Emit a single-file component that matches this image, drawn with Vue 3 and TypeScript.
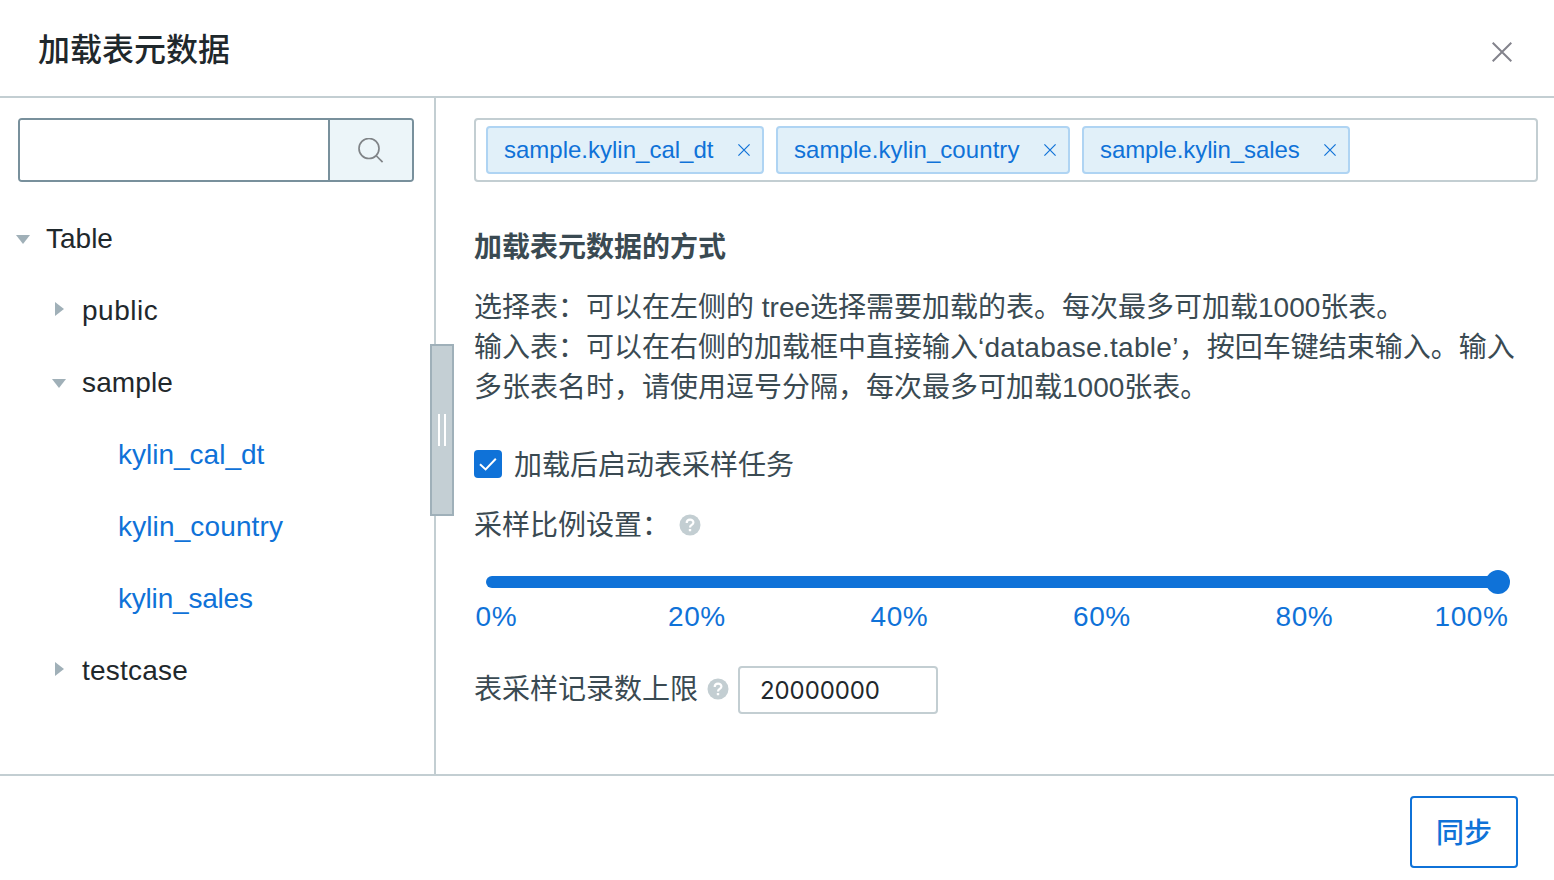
<script setup lang="ts">
import { ref } from 'vue'

interface TreeNode {
  label: string
  level: number
  state: 'open' | 'closed' | 'leaf'
}

interface Tag {
  name: string
  size: string
}

const nodes: TreeNode[] = [
  { label: 'Table', level: 0, state: 'open' },
  { label: 'public', level: 1, state: 'closed' },
  { label: 'sample', level: 1, state: 'open' },
  { label: 'kylin_cal_dt', level: 2, state: 'leaf' },
  { label: 'kylin_country', level: 2, state: 'leaf' },
  { label: 'kylin_sales', level: 2, state: 'leaf' },
  { label: 'testcase', level: 1, state: 'closed' },
]

const tags = ref<Tag[]>([
  { name: 'sample.kylin_cal_dt', size: 'medium' },
  { name: 'sample.kylin_country', size: 'large' },
  { name: 'sample.kylin_sales', size: 'small' },
])

const marks: string[] = ['0%', '20%', '40%', '60%', '80%', '100%']
const keyword = ref('')
const limit = ref('20000000')
</script>

<template>
  <div class="dialog">
    <header class="header">
      <h1 class="title">加载表元数据</h1>
      <svg class="close" viewBox="0 0 20 20" width="20" height="20">
        <path d="M0.7 0.7L19.3 19.3M19.3 0.7L0.7 19.3" />
      </svg>
    </header>

    <div class="body">
      <aside class="side">
        <div class="search">
          <input v-model="keyword" class="search-input" type="text" />
          <div class="search-button">
            <svg viewBox="0 0 26 26" width="26" height="26">
              <circle cx="11" cy="10.5" r="10" />
              <path d="M18 17.5L24.6 24.1" />
            </svg>
          </div>
        </div>
        <div class="tree">
          <div v-for="n in nodes" :key="n.label" class="node" :class="['level-' + n.level, n.state]">
            <span class="caret">
              <svg v-if="n.state === 'open'" class="down" viewBox="0 0 14 9" width="14" height="9"><path d="M0 0H14L7 9Z" /></svg>
              <svg v-else-if="n.state === 'closed'" class="right" viewBox="0 0 9 14" width="9" height="14"><path d="M0 0L9 7L0 14Z" /></svg>
            </span>
            <span class="label" :class="n.label">{{ n.label }}</span>
          </div>
        </div>
        <div class="handle"><i></i><i></i></div>
      </aside>

      <main class="main">
        <div class="tags">
          <span v-for="t in tags" :key="t.name" class="tag" :class="t.size">
            <span class="tag-text">{{ t.name }}</span>
            <svg viewBox="0 0 12 12" width="12" height="12"><path d="M0.4 0.4L11.6 11.6M11.6 0.4L0.4 11.6" /></svg>
          </span>
        </div>

        <h2 class="subtitle">加载表元数据的方式</h2>
        <div class="desc">
          <p>选择表：可以在左侧的 tree选择需要加载的表。每次最多可加载1000张表。</p>
          <p>输入表：可以在右侧的加载框中直接输入<span class="sample-name">‘database.table’</span>，按回车键结束输入。输入</p>
          <p>多张表名时，请使用逗号分隔，每次最多可加载1000张表。</p>
        </div>

        <div class="check">
          <span class="box">
            <svg viewBox="0 0 28 28" width="28" height="28"><path d="M6 14.3L11.6 19.4L21.8 8.8" /></svg>
          </span>
          <span class="check-text">加载后启动表采样任务</span>
        </div>

        <div class="ratio">
          <span class="ratio-text">采样比例设置：</span>
          <svg class="help" viewBox="0 0 22 22" width="22" height="22">
            <circle cx="11" cy="11" r="10.5" />
            <path d="M7.7 8.9C7.7 4.6 14.4 4.6 14.4 8.6C14.4 11 11 10.9 11 13.4" />
            <rect x="9.8" y="14.9" width="2.4" height="2.4" rx="0.6" />
          </svg>
        </div>

        <div class="slider"><div class="thumb"></div></div>
        <div class="marks">
          <span v-for="m in marks" :key="m">{{ m }}</span>
        </div>

        <div class="limit">
          <span class="limit-text">表采样记录数上限</span>
          <svg class="help" viewBox="0 0 22 22" width="22" height="22">
            <circle cx="11" cy="11" r="10.5" />
            <path d="M7.7 8.9C7.7 4.6 14.4 4.6 14.4 8.6C14.4 11 11 10.9 11 13.4" />
            <rect x="9.8" y="14.9" width="2.4" height="2.4" rx="0.6" />
          </svg>
          <input v-model="limit" class="limit-input" type="text" />
        </div>
      </main>
    </div>

    <footer class="footer">
      <button class="sync" type="button">同步</button>
    </footer>
  </div>
</template>

<style>
body {
  margin: 0;
  background: #fff;
}
</style>

<style scoped>
* {
  box-sizing: border-box;
}
.dialog {
  display: flex;
  flex-direction: column;
  width: 1554px;
  height: 880px;
  overflow: hidden;
  background: #fff;
  color: #3a4a52;
  font-family: 'Liberation Sans', 'Noto Sans CJK SC', sans-serif;
  font-size: 28px;
  white-space: nowrap;
}
svg {
  display: block;
  flex: none;
}
.header {
  display: flex;
  justify-content: space-between;
  height: 98px;
  padding: 0 42px 0 38px;
  border-bottom: 2px solid #c3ced2;
}
.title {
  margin: 0;
  color: #1f282c;
  font-size: 32px;
  font-weight: 500;
  line-height: 100px;
}
.close {
  margin-top: 42px;
  fill: none;
  stroke: #83838c;
  stroke-width: 2;
}
.body {
  display: flex;
  height: 676px;
}
.side {
  position: relative;
  width: 436px;
  padding: 20px 20px 0 18px;
  border-right: 2px solid #c3ced2;
}
.search {
  display: flex;
  width: 396px;
  height: 64px;
  overflow: hidden;
  border: 2px solid #78909c;
  border-radius: 4px;
}
.search-input {
  width: 308px;
  padding: 0 16px;
  border: 0;
  outline: 0;
  font: inherit;
}
.search-button {
  flex: 1;
  padding: 18px 0 0 28px;
  border-left: 2px solid #78909c;
  background: #ecf5f9;
}
.search-button svg {
  fill: none;
  stroke: #808488;
  stroke-width: 1.7;
}
.tree {
  margin: 21px 0 0 -18px;
}
.node {
  display: flex;
  height: 72px;
  color: #1f282c;
  line-height: 72px;
}
.node.leaf {
  color: #0f72d8;
}
.level-0 {
  padding-left: 14px;
}
.level-1 {
  padding-left: 50px;
}
.level-2 {
  padding-left: 86px;
}
.label.public {
  letter-spacing: 0.5px;
}
.label.sample,
.label.kylin_country {
  letter-spacing: 0.13px;
}
.label.kylin_sales {
  letter-spacing: -0.2px;
}
.label.testcase {
  letter-spacing: 0.22px;
}
.caret {
  width: 32px;
  flex: none;
}
.caret svg {
  fill: #a0b0b8;
}
.caret .down {
  margin: 32px 0 0 2px;
}
.caret .right {
  margin: 27px 0 0 5px;
}
.handle {
  position: absolute;
  z-index: 1;
  top: 246px;
  left: 430px;
  display: flex;
  align-items: center;
  justify-content: center;
  gap: 4px;
  width: 24px;
  height: 172px;
  border: 2px solid #9fb0b9;
  background: #c4cfd4;
}
.handle i {
  width: 2px;
  height: 32px;
  background: #fff;
}
.main {
  width: 1118px;
  padding: 20px 16px 0 38px;
}
.tags {
  display: flex;
  align-items: center;
  gap: 12px;
  height: 64px;
  padding-left: 10px;
  border: 2px solid #c3ced2;
  border-radius: 4px;
}
.tag {
  display: flex;
  align-items: center;
  justify-content: space-between;
  height: 48px;
  padding: 0 12px 0 16px;
  border: 2px solid #afd4f3;
  border-radius: 4px;
  background: #e1f0f9;
  color: #0f72d8;
  font-size: 24px;
  line-height: 44px;
}
.tag.medium {
  width: 278px;
}
.tag.large {
  width: 294px;
  letter-spacing: 0.07px;
}
.tag.small {
  width: 268px;
  letter-spacing: -0.1px;
}
.tag svg {
  fill: none;
  stroke: #0f72d8;
  stroke-width: 1.2;
}
.subtitle {
  margin: 46px 0 0;
  font-size: 28px;
  font-weight: 700;
  line-height: 40px;
}
.desc {
  margin-top: 20px;
  line-height: 40px;
}
.desc p {
  height: 40px;
  margin: 0;
}
.sample-name {
  letter-spacing: 0.28px;
}
.check {
  display: flex;
  align-items: center;
  gap: 12px;
  height: 40px;
  margin-top: 36px;
}
.check-text {
  margin-top: -2px;
}
.box {
  width: 28px;
  height: 28px;
  border-radius: 4px;
  background: #0f72d8;
}
.box svg {
  fill: none;
  stroke: #fff;
  stroke-width: 2;
}
.ratio {
  display: flex;
  align-items: center;
  gap: 9px;
  height: 40px;
  margin-top: 21px;
}
.ratio-text {
  margin-top: -4px;
}
.help {
  fill: #c3ced2;
}
.help path {
  fill: none;
  stroke: #fff;
  stroke-width: 2.2;
}
.help rect {
  fill: #fff;
}
.slider {
  display: flex;
  align-items: center;
  justify-content: flex-end;
  width: 1012px;
  height: 12px;
  margin: 31px 0 0 12px;
  border-radius: 6px;
  background: #0f72d8;
}
.thumb {
  flex: none;
  width: 24px;
  height: 24px;
  margin-right: -12px;
  border-radius: 50%;
  background: #0f72d8;
}
.marks {
  display: grid;
  grid-template-columns: 192.5px 202.5px 202.5px 202.5px 159px 80px;
  height: 40px;
  margin: 9px 0 0 1.5px;
  color: #0f72d8;
  letter-spacing: 0.6px;
  line-height: 40px;
}
.limit {
  display: flex;
  align-items: center;
  height: 48px;
  margin-top: 29px;
}
.limit-text {
  margin-top: -6px;
}
.limit .help {
  margin: -2px 9px 0;
}
.limit-input {
  width: 200px;
  height: 48px;
  padding: 0 20px;
  border: 2px solid #c3ced2;
  border-radius: 4px;
  outline: 0;
  color: #1f282c;
  font-family: Inter, sans-serif;
  font-size: 24px;
  letter-spacing: -0.1px;
}
.footer {
  display: flex;
  justify-content: flex-end;
  height: 106px;
  padding: 20px 36px 0 0;
  border-top: 2px solid #c3ced2;
}
.sync {
  width: 108px;
  height: 72px;
  padding: 0 0 2px;
  border: 2px solid #0f72d8;
  border-radius: 4px;
  background: #fff;
  color: #0f72d8;
  font-family: inherit;
  font-size: 28px;
  font-weight: 500;
}
</style>
